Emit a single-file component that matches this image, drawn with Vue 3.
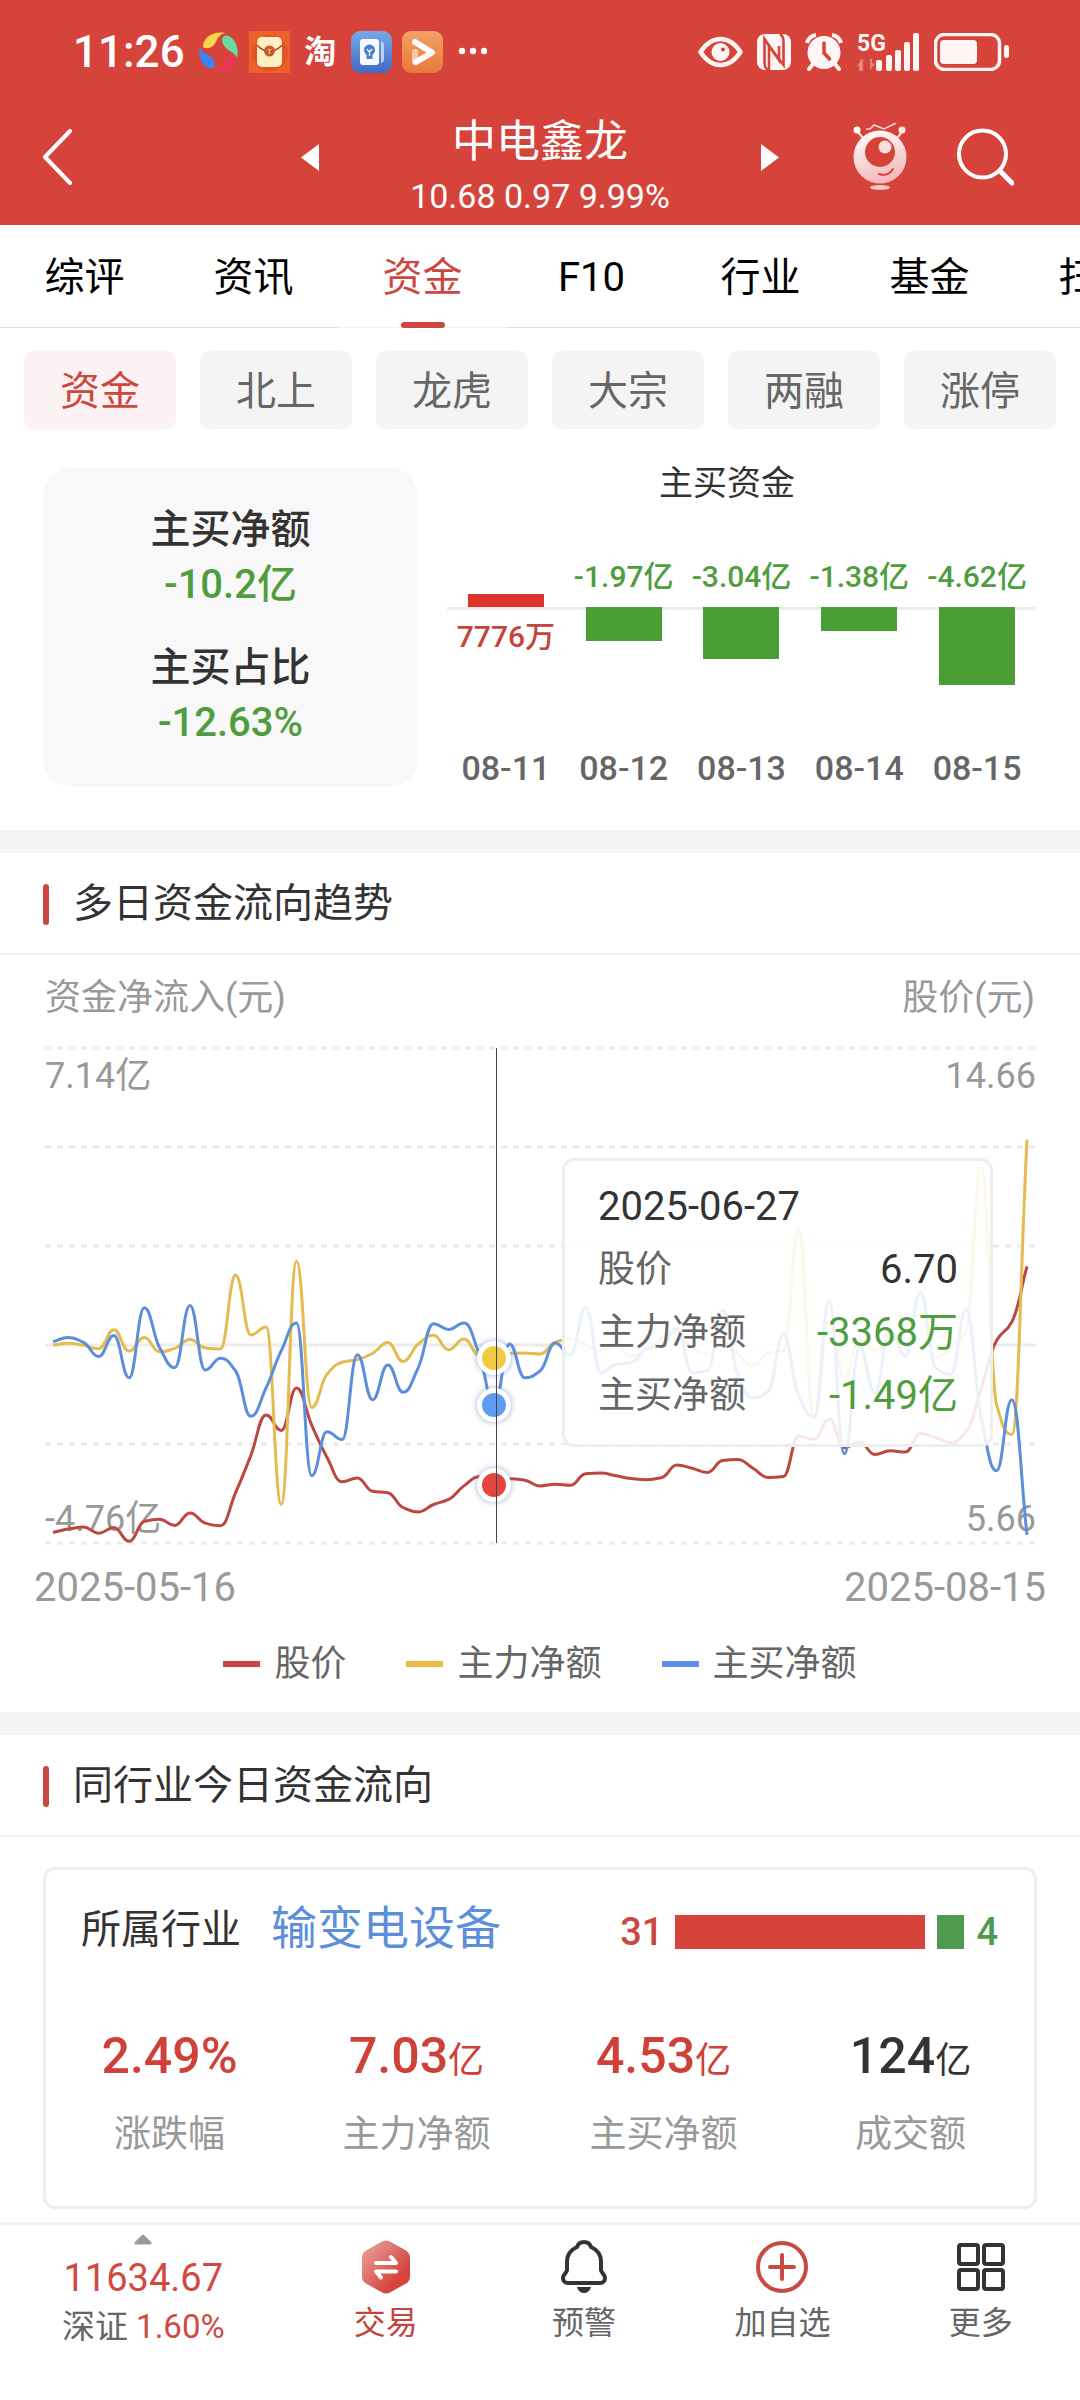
<template>
  <div class="page">
    <header class="header">
      <div class="status">
        <span class="time">11:26</span>
        <div class="apps">
          <svg width="40" height="42" viewBox="0 0 40 42">
            <path d="M4 15C5 6 14 0 26 2c-8 2-8 9-12 13-4 3-10 3-10 0z" fill="#fad648" />
            <path d="M24 6c4-4 10 0 13 7 2 5 2 10 1 14-3-6-7-6-11-10-3-3-5-8-3-11z" fill="#68dba0" />
            <path d="M37 27c-3 10-12 15-23 14 8-2 9-8 12-12 4-4 9-5 11-2z" fill="#ea3557" />
            <path d="M1 16c2 6 6 6 11 10 4 3 5 8 3 10-4 3-9 0-12-5-3-5-3-11-2-15z" fill="#3d82f7" />
          </svg>
          <svg width="41" height="42" viewBox="0 0 41 42">
            <rect width="41" height="42" fill="#ec6029" />
            <circle cx="21" cy="22" r="18" fill="#e35424" />
            <rect x="8" y="6" width="25" height="30" rx="5" fill="#fff0c4" />
            <path d="M8 14c4 5 8 6 12 6s9-1 13-6" fill="none" stroke="#a84b24" stroke-width="1.5" />
            <circle cx="20.500" cy="20" r="5.500" fill="#c8592c" />
            <text x="20.500" y="23" font-size="8" text-anchor="middle" fill="#ffe3a0">T</text>
          </svg>
          <span class="tao">淘</span>
          <svg width="41" height="42" viewBox="0 0 41 42">
            <defs>
              <linearGradient id="blueApp" x2="0" y2="1">
                <stop stop-color="#78a9e8" />
                <stop offset="1" stop-color="#4269c4" />
              </linearGradient>
            </defs>
            <rect width="41" height="42" rx="9" fill="url(#blueApp)" />
            <path d="M30 10q3 1 3 4v14q0 3-3 4z" fill="#b9d0f3" />
            <rect x="9" y="8" width="19" height="26" rx="3" fill="#f6faff" />
            <circle cx="18.500" cy="19" r="5.500" fill="#4c7dd2" />
            <path d="M15.500 24h6v4h-6z" fill="#4c7dd2" />
            <path d="M16 18l2.500 3 2.500-3M18.500 21v4" fill="none" stroke="#fff" stroke-width="1.200" />
          </svg>
          <svg width="41" height="42" viewBox="0 0 41 42">
            <defs>
              <linearGradient id="playApp" x2="0" y2="1">
                <stop stop-color="#f3a266" />
                <stop offset="1" stop-color="#e8793a" />
              </linearGradient>
            </defs>
            <rect width="41" height="42" rx="9" fill="url(#playApp)" />
            <path d="M13 21v10" stroke="#f7c9a6" stroke-width="6" stroke-linecap="round" />
            <path d="M13 11l17 10.500L14 31" fill="none" stroke="#fff" stroke-width="6" stroke-linecap="round" stroke-linejoin="round" />
          </svg>
          <svg width="40" height="42" viewBox="0 0 40 42" fill="#fff">
            <circle cx="9" cy="20" r="3.200" />
            <circle cx="20" cy="20" r="3.200" />
            <circle cx="31" cy="20" r="3.200" />
          </svg>
        </div>
        <div class="signals">
          <svg width="45" height="32" viewBox="0 0 45 32">
            <path d="M2.500 16Q11 3 22.500 3T42.500 16Q34 29 22.500 29T2.500 16z" fill="none" stroke="#fff5f5" stroke-width="4.500" stroke-linejoin="round" />
            <circle cx="22.500" cy="16" r="9" fill="#fff5f5" />
            <circle cx="25" cy="13.500" r="2" fill="#d5433b" />
          </svg>
          <svg width="34" height="36" viewBox="0 0 34 36">
            <rect width="34" height="36" rx="8" fill="#fff5f5" />
            <path d="M11 36Q7.500 34 7.500 29V5L22 26V12" fill="none" stroke="#d5433b" stroke-width="2.600" />
            <path d="M23 0Q26.500 2 26.500 7V31L12 12V36" fill="none" stroke="#d5433b" stroke-width="2.600" />
          </svg>
          <svg width="38" height="38" viewBox="0 0 38 38">
            <path d="M2 10q2-7 9-8M36 10q-2-7-9-8" fill="none" stroke="#fff5f5" stroke-width="4" />
            <path d="M8 31l-4 5M30 31l4 5" stroke="#fff5f5" stroke-width="4" stroke-linecap="round" />
            <circle cx="19" cy="19.500" r="16.500" fill="#fff5f5" />
            <path d="M19 10v10l5.500 6" fill="none" stroke="#d5433b" stroke-width="3.500" stroke-linecap="round" />
          </svg>
          <svg class="signal" width="63" height="38" viewBox="0 0 63 38" fill="#fff5f5">
            <text x="0" y="18" font-size="23" font-weight="700">5G</text>
            <path d="M0 33l5-7v12h-3v-5zM18 31l-5 6V26h2v4z" opacity=".35" />
            <path d="M5 26v12" stroke="#fff5f5" stroke-width="3" opacity=".2" />
            <rect x="19" y="27" width="6" height="11" rx="2" />
            <rect x="29" y="22" width="6" height="16" rx="2" />
            <rect x="38" y="17" width="6" height="21" rx="2" />
            <rect x="47" y="9" width="6" height="29" rx="2" />
            <rect x="56" y="0" width="6" height="38" rx="2" />
          </svg>
          <svg width="75" height="38" viewBox="0 0 75 38">
            <rect x="1.500" y="1.500" width="64" height="35" rx="9" fill="none" stroke="#fff5f5" stroke-width="3.500" />
            <rect x="6" y="7" width="37" height="24" rx="4" fill="#fff5f5" />
            <rect x="70" y="12" width="5" height="13" rx="2.500" fill="#fff5f5" />
          </svg>
        </div>
      </div>

      <div class="nav">
        <div class="nav-side">
          <button type="button" class="icon-btn" aria-label="返回">
            <svg width="30" height="56" viewBox="0 0 30 56">
              <path d="M27 2L2 28l25 26" fill="none" stroke="#fff" stroke-width="4" stroke-linecap="round" stroke-linejoin="round" />
            </svg>
          </button>
        </div>
        <div class="nav-center">
          <button type="button" class="icon-btn" aria-label="上一只">
            <svg width="18" height="27" viewBox="0 0 18 27"><path d="M18 0v27L0 13.500z" fill="#fff" /></svg>
          </button>
          <div class="stock">
            <h1>中电鑫龙</h1>
            <p>10.68 0.97 9.99%</p>
          </div>
          <button type="button" class="icon-btn" aria-label="下一只">
            <svg width="18" height="27" viewBox="0 0 18 27"><path d="M0 0v27l18-13.500z" fill="#fff" /></svg>
          </button>
        </div>
        <div class="nav-side right">
          <button type="button" class="icon-btn" aria-label="助手">
            <svg width="54" height="68" viewBox="0 0 54 68">
              <defs>
                <linearGradient id="robot" x2=".3" y2="1">
                  <stop stop-color="#fff" />
                  <stop offset="1" stop-color="#f4bcbc" />
                </linearGradient>
              </defs>
              <path d="M4 8l7 8M50 8l-7 8" stroke="#fbe5e5" stroke-width="2" />
              <circle cx="4" cy="7" r="3.500" fill="#fff" />
              <circle cx="49" cy="7" r="3.500" fill="#fbe5e5" />
              <path d="M13 6h4l4-4 10 4L43 0" fill="none" stroke="#fbdcdc" stroke-width="1.500" />
              <circle cx="27" cy="34" r="26.500" fill="url(#robot)" />
              <circle cx="27" cy="29" r="15" fill="#d5433b" />
              <circle cx="32" cy="24" r="6.500" fill="#fbdede" />
              <path d="M26 51q9 3 14-5" fill="none" stroke="#d5433b" stroke-width="2" stroke-linecap="round" />
              <ellipse cx="27" cy="64.500" rx="10" ry="2.500" fill="#f6c4c4" />
            </svg>
          </button>
          <button type="button" class="icon-btn" aria-label="搜索">
            <svg width="57" height="58" viewBox="0 0 57 58">
              <circle cx="25.500" cy="26" r="23.500" fill="none" stroke="#fff" stroke-width="4" />
              <path d="M43 43l12 12" stroke="#fff" stroke-width="5" stroke-linecap="round" />
            </svg>
          </button>
        </div>
      </div>
    </header>

    <nav class="tabs">
      <a v-for="tab in tabs" :key="tab" href="#" :class="{ active: tab === '资金' }" @click.prevent>{{ tab }}</a>
    </nav>

    <div class="pills">
      <button
        v-for="pill in pills"
        :key="pill"
        type="button"
        :class="{ active: pill === activePill }"
        @click="activePill = pill"
      >
        {{ pill }}
      </button>
    </div>

    <section class="overview">
      <div class="summary">
        <div>
          <h3>主买净额</h3>
          <p>-10.2亿</p>
        </div>
        <div>
          <h3>主买占比</h3>
          <p>-12.63%</p>
        </div>
      </div>
      <div class="bar-chart">
        <h3>主买资金</h3>
        <div class="bars">
          <div v-for="bar in bars" :key="bar.date" class="bar-col" :class="bar.up ? 'up' : 'down'">
            <div class="upper">
              <div v-if="bar.up" class="bar" :style="{ height: bar.size + 'px' }"></div>
              <span v-else>{{ bar.label }}</span>
            </div>
            <div class="lower">
              <span v-if="bar.up">{{ bar.label }}</span>
              <div v-else class="bar" :style="{ height: bar.size + 'px' }"></div>
            </div>
            <div class="date">{{ bar.date }}</div>
          </div>
        </div>
      </div>
    </section>

    <section class="block">
      <h2>多日资金流向趋势</h2>
      <div class="axis-names">
        <span>资金净流入(元)</span>
        <span>股价(元)</span>
      </div>
      <div class="plot">
        <div class="scale">
          <span>7.14亿</span>
          <span>14.66</span>
        </div>
        <div class="scale low">
          <span>-4.76亿</span>
          <span>5.66</span>
        </div>
        <svg class="lines" :viewBox="`0 0 ${W} ${H}`" preserveAspectRatio="none">
          <g stroke="#ececec" stroke-width="3">
            <line
              v-for="n in 6"
              :key="n"
              x1="0"
              :x2="W"
              :y1="(n - 1) * 99"
              :y2="(n - 1) * 99"
              :stroke-dasharray="n === 4 ? 'none' : '6 6'"
            />
          </g>
          <g fill="none" stroke-width="3" stroke-linejoin="round">
            <path :d="curve(price)" stroke="#bd4740" />
            <path :d="curve(mainForce)" stroke="#e5bb50" />
            <path :d="curve(activeBuy)" stroke="#5c8edc" />
          </g>
          <g v-for="dot in dots" :key="dot.color">
            <circle class="halo" cx="449" :cy="dot.y" r="17" fill="#fff" />
            <circle cx="449" :cy="dot.y" r="12" :fill="dot.color" />
          </g>
          <line x1="451.500" x2="451.500" y1="0" :y2="H" stroke="#444" />
        </svg>
        <div class="tooltip">
          <div>2025-06-27</div>
          <div><span>股价</span><b>6.70</b></div>
          <div><span>主力净额</span><b class="green">-3368万</b></div>
          <div><span>主买净额</span><b class="green">-1.49亿</b></div>
        </div>
      </div>
      <div class="range">
        <span>2025-05-16</span>
        <span>2025-08-15</span>
      </div>
      <ul class="legend">
        <li class="l-red">股价</li>
        <li class="l-yellow">主力净额</li>
        <li class="l-blue">主买净额</li>
      </ul>
    </section>

    <section class="block">
      <h2>同行业今日资金流向</h2>
      <div class="industry">
        <div class="industry-head">
          <span>所属行业</span>
          <a href="#" @click.prevent>输变电设备</a>
          <div class="ratio">
            <b class="red">31</b>
            <i class="rise"></i>
            <i class="fall"></i>
            <b class="leaf">4</b>
          </div>
        </div>
        <div class="stats">
          <div v-for="s in stats" :key="s.name">
            <p :class="s.tone">{{ s.value }}<small>{{ s.unit }}</small></p>
            <span>{{ s.name }}</span>
          </div>
        </div>
      </div>
    </section>

    <footer class="footer">
      <button type="button" class="index">
        <svg width="20" height="12" viewBox="0 0 20 12">
          <path d="M10 2l7 7H3z" fill="#999" stroke="#999" stroke-width="3" stroke-linejoin="round" />
        </svg>
        <strong>11634.67</strong>
        <span>深证 <em>1.60%</em></span>
      </button>
      <button type="button" class="trade">
        <svg width="48" height="54" viewBox="0 0 48 54">
          <defs>
            <linearGradient id="hex" x2="1" y2="1">
              <stop stop-color="#e9aaa6" />
              <stop offset=".75" stop-color="#d5433b" />
            </linearGradient>
          </defs>
          <path d="M20 1.500q4-2 8 0l16 9q4 2.500 4 7v19q0 4.500-4 7l-16 9q-4 2-8 0l-16-9q-4-2.500-4-7v-19q0-4.500 4-7z" fill="url(#hex)" />
          <path d="M14 23h20l-5-6M34 31.500H14l5 6" fill="none" stroke="#fff" stroke-width="4" stroke-linecap="round" stroke-linejoin="round" />
        </svg>
        交易
      </button>
      <button type="button">
        <svg width="46" height="54" viewBox="0 0 46 54">
          <path
            d="M23 2c-4 0-6 2-7 5C9 10 6 16 6 22v8c0 3-4 4-4 8 0 3 2 5 5 5h32c3 0 5-2 5-5 0-4-4-5-4-8v-8c0-6-3-12-10-15-1-3-3-5-7-5z"
            fill="none" stroke="#333" stroke-width="4" stroke-linejoin="round"
          />
          <path d="M16 47h14q-2 6-7 6t-7-6z" fill="#333" />
        </svg>
        预警
      </button>
      <button type="button">
        <svg width="54" height="54" viewBox="0 0 54 54" fill="none" stroke="#c94a43" stroke-width="4">
          <circle cx="27" cy="27" r="24" />
          <path d="M27 15v24M15 27h24" stroke-linecap="round" />
        </svg>
        加自选
      </button>
      <button type="button">
        <svg width="48" height="54" viewBox="0 0 48 54" fill="none" stroke="#333" stroke-width="4">
          <rect x="2" y="5" width="19" height="19" rx="2" />
          <rect x="27" y="5" width="19" height="19" rx="2" />
          <rect x="2" y="30" width="19" height="19" rx="2" />
          <rect x="27" y="30" width="19" height="19" rx="2" />
        </svg>
        更多
      </button>
    </footer>
  </div>
</template>

<script setup>
import { ref } from 'vue'

const tabs = ['综评', '资讯', '资金', 'F10', '行业', '基金', '扫雷']
const pills = ['资金', '北上', '龙虎', '大宗', '两融', '涨停']
const activePill = ref('资金')

const bars = [
  { date: '08-11', label: '7776万', up: true, size: 13 },
  { date: '08-12', label: '-1.97亿', up: false, size: 34 },
  { date: '08-13', label: '-3.04亿', up: false, size: 52 },
  { date: '08-14', label: '-1.38亿', up: false, size: 24 },
  { date: '08-15', label: '-4.62亿', up: false, size: 78 }
]

const stats = [
  { name: '涨跌幅', value: '2.49%', unit: '', tone: 'red' },
  { name: '主力净额', value: '7.03', unit: '亿', tone: 'red' },
  { name: '主买净额', value: '4.53', unit: '亿', tone: 'red' },
  { name: '成交额', value: '124', unit: '亿', tone: '' }
]

const W = 991
const H = 495
// one level per trading day, 54 is the top of the axis and 1519 the bottom
const TOP = 54
const BOTTOM = 1519

const price = [
  1488, 1478, 1472, 1490, 1473, 1514, 1455, 1449, 1467, 1430, 1460, 1468, 1370, 1260, 1140, 1186,
  1060, 1170, 1265, 1338, 1327, 1366, 1370, 1414, 1427, 1405, 1390, 1350, 1323, 1346, 1329, 1333,
  1350, 1345, 1348, 1314, 1312, 1320, 1328, 1332, 1325, 1288, 1298, 1310, 1275, 1272, 1298, 1325,
  1322, 1202, 1212, 1152, 1237, 1220, 1257, 1246, 1250, 1195, 1207, 1222, 1190, 1060, 920, 865, 700
]
const mainForce = [
  933, 928, 934, 944, 888, 951, 911, 953, 943, 917, 942, 945, 726, 903, 880, 1405,
  685, 1118, 1020, 984, 976, 958, 926, 982, 930, 904, 947, 915, 965, 970, 958, 957,
  960, 925, 915, 932, 950, 935, 965, 945, 915, 890, 945, 960, 925, 960, 995, 958,
  950, 594, 1150, 860, 1030, 915, 948, 925, 880, 843, 970, 940, 890, 408, 1110, 1198, 325
]
const activeBuy = [
  923, 911, 925, 967, 905, 1030, 823, 940, 1000, 816, 1007, 972, 1010, 1144, 1060, 950,
  868, 1320, 1190, 1213, 962, 1095, 992, 1073, 1000, 870, 887, 868, 960, 1111, 930, 1030,
  1010, 927, 963, 822, 1015, 990, 985, 945, 935, 885, 1015, 1010, 828, 1020, 1090, 1070,
  900, 1085, 1145, 803, 1255, 940, 1075, 890, 965, 778, 1000, 1020, 828, 1150, 1305, 1095, 1495
]

const dots = [
  { color: '#efcb45', y: 310 },
  { color: '#5f9bf2', y: 357 },
  { color: '#e2463f', y: 437 }
]

// length of the curve handles, as a share of the distance between two days
const SMOOTH = 0.45

// monotone cubic curve, flat at every peak and valley
function curve(levels) {
  const step = 974 / (levels.length - 1)
  const ys = levels.map(v => ((v - TOP) / (BOTTOM - TOP)) * H)
  const slopes = ys.map((y, i) => {
    if (i === 0) return ys[1] - y
    if (i === ys.length - 1) return y - ys[i - 1]
    const a = y - ys[i - 1]
    const b = ys[i + 1] - y
    return a * b <= 0 ? 0 : (2 * a * b) / (a + b)
  })
  let d = `M8 ${ys[0].toFixed(1)}`
  for (let i = 1; i < ys.length; i++) {
    const x0 = 8 + step * (i - 1)
    const x1 = 8 + step * i
    d += `C${(x0 + step * SMOOTH).toFixed(1)} ${(ys[i - 1] + slopes[i - 1] * SMOOTH).toFixed(1)}`
    d += ` ${(x1 - step * SMOOTH).toFixed(1)} ${(ys[i] - slopes[i] * SMOOTH).toFixed(1)}`
    d += ` ${x1.toFixed(1)} ${ys[i].toFixed(1)}`
  }
  return d
}
</script>

<style>
body {
  background: #fff;
}
</style>

<style scoped>
.page {
  display: flex;
  flex-direction: column;
  min-height: 100vh;
  overflow-x: hidden;
  background: #fff;
  color: #333;
  font-family: Roboto, 'Noto Sans CJK SC', sans-serif;
}

h1, h2, h3, p, ul {
  margin: 0;
  padding: 0;
  font-weight: 400;
}

svg {
  display: block;
  flex-shrink: 0;
}

button {
  border: none;
  padding: 0;
  background: none;
  font-family: inherit;
  color: inherit;
  cursor: pointer;
}

a {
  color: inherit;
  text-decoration: none;
}

/* header */
.header {
  background: #d5433b;
  color: #fff;
}

.status {
  display: flex;
  align-items: center;
  height: 103px;
  padding: 0 71px 0 73px;
}

.time {
  font-size: 44px;
  font-weight: 500;
}

.apps {
  display: flex;
  align-items: center;
  gap: 10px;
  margin-left: 14px;
}

.tao {
  width: 41px;
  font-size: 32px;
  font-weight: 700;
  line-height: 42px;
  text-align: center;
}

.signals {
  display: flex;
  align-items: center;
  gap: 14px;
  margin-left: auto;
}

.signal {
  overflow: visible;
}

.nav {
  display: grid;
  grid-template-columns: 1fr 478px 1fr;
  align-items: center;
  height: 122px;
}

.nav-side {
  padding: 0 66px 0 43px;
}

.nav-center {
  display: flex;
  justify-content: space-between;
  align-items: center;
}

.stock {
  padding-top: 8px;
  text-align: center;
}

.stock h1 {
  font-size: 44px;
  line-height: 56px;
}

.stock p {
  font-size: 34px;
  line-height: 52px;
}

.icon-btn {
  padding-bottom: 14px;
}

.nav-side.right {
  display: flex;
  justify-content: flex-end;
  gap: 50px;
}

/* tabs */
.tabs {
  display: flex;
  overflow: hidden;
}

.tabs a {
  flex: 0 0 169px;
  padding-top: 4px;
  border-bottom: 1px solid #ddd;
  color: #000;
  font-size: 40px;
  line-height: 98px;
  text-align: center;
}

.tabs a.active {
  position: relative;
  border-color: #f2f2f2;
  color: #cc4740;
}

.tabs a.active::after {
  content: '';
  position: absolute;
  bottom: -1px;
  left: 50%;
  width: 44px;
  height: 6px;
  margin-left: -22px;
  border-radius: 3px;
  background: #cc4740;
}

.pills {
  display: flex;
  gap: 24px;
  padding: 23px 24px 39px;
}

.pills button {
  flex: 1;
  padding-top: 4px;
  border-radius: 10px;
  background: #f4f4f4;
  color: #666;
  font-size: 40px;
  line-height: 74px;
}

.pills button.active {
  background: #fdf2f3;
  color: #cc4740;
}

/* overview */
.overview {
  display: flex;
  gap: 29px;
  padding: 0 44px 43px 43px;
}

.summary {
  display: flex;
  flex: 375;
  flex-direction: column;
  gap: 28px;
  padding: 34px 0 37px;
  border-radius: 28px;
  background: #f8f8f8;
  text-align: center;
}

.summary h3,
.summary p {
  font-size: 40px;
  font-weight: 500;
  line-height: 55px;
}

.summary p {
  color: #4f9d3e;
}

.bar-chart {
  flex: 589;
}

.bar-chart h3 {
  padding-right: 29px;
  font-size: 34px;
  line-height: 30px;
  text-align: center;
}

.bars {
  display: flex;
  font-size: 30px;
  font-weight: 500;
  line-height: 30px;
  white-space: nowrap;
}

.bar-col {
  display: flex;
  flex: 1;
  flex-direction: column;
  min-width: 0;
}

.upper,
.lower {
  display: flex;
  flex-direction: column;
  align-items: center;
}

.upper {
  justify-content: flex-end;
  height: 109px;
}

.lower {
  height: 146px;
  background: linear-gradient(#ececec, #ececec) top / 100% 3px no-repeat;
}

.down .upper {
  padding-bottom: 15px;
  box-sizing: border-box;
  color: #4f9d3e;
}

.up .lower {
  padding-top: 15px;
  box-sizing: border-box;
  color: #c4453d;
}

.bar {
  width: 76px;
  background: #4b9e33;
}

.up .bar {
  background: #dc342a;
}

.date {
  color: #666;
  font-size: 34px;
  font-weight: 500;
  text-align: center;
}

/* blocks */
.block {
  border-top: 23px solid #f4f4f4;
}

.block h2 {
  display: flex;
  align-items: center;
  gap: 24px;
  padding: 2px 0 0 43px;
  border-bottom: 2px solid #f0f0f0;
  font-size: 40px;
  line-height: 98px;
}

.block h2::before {
  content: '';
  width: 6px;
  height: 41px;
  border-radius: 3px;
  background: #cc4740;
}

.axis-names {
  display: flex;
  justify-content: space-between;
  padding: 17px 45px 24px;
  color: #999;
  font-size: 36px;
  line-height: 52px;
}

.plot {
  position: relative;
  display: flex;
  flex-direction: column;
  justify-content: space-between;
  height: 495px;
  margin: 0 44px 0 45px;
}

.scale {
  display: flex;
  justify-content: space-between;
  color: #999;
  font-size: 36px;
  line-height: 56px;
}

.scale.low {
  line-height: 48px;
}

.lines {
  position: absolute;
  top: 0;
  left: 0;
  width: 100%;
  height: 100%;
  overflow: visible;
}

.halo {
  filter: drop-shadow(0 0 3px rgba(90, 120, 180, 0.6));
}

.tooltip {
  position: absolute;
  top: 110px;
  right: 43px;
  box-sizing: border-box;
  width: 431px;
  padding: 14px 32px 17px 33px;
  border: 3px solid #eee;
  border-radius: 12px;
  background: rgba(255, 255, 255, 0.88);
  font-size: 40px;
  line-height: 63px;
}

.tooltip div {
  display: flex;
  justify-content: space-between;
}

.tooltip span {
  color: #666;
  font-size: 37px;
}

.tooltip b {
  font-weight: 400;
}

.tooltip .green {
  color: #4f9d3e;
}

.range {
  display: flex;
  justify-content: space-between;
  padding: 19px 34px 25px;
  color: #999;
  font-size: 40px;
  line-height: 52px;
}

.legend {
  display: flex;
  justify-content: center;
  gap: 60px;
  padding-bottom: 23px;
  list-style: none;
}

.legend li {
  display: flex;
  align-items: center;
  gap: 14px;
  color: #666;
  font-size: 36px;
  line-height: 50px;
}

.legend li::before {
  content: '';
  width: 37px;
  height: 6px;
  background: #cc463e;
}

.legend .l-yellow::before {
  background: #ebbb45;
}

.legend .l-blue::before {
  background: #5c8eea;
}

/* industry */
.industry {
  margin: 30px 43px 13px;
  padding: 25px 0 44px;
  border: 3px solid #eee;
  border-radius: 12px;
}

.industry-head {
  display: flex;
  align-items: center;
  padding: 0 36px 0 35px;
  font-size: 40px;
  line-height: 66px;
}

.industry-head a {
  margin-left: 30px;
  padding-bottom: 4px;
  color: #5c8edc;
  font-size: 46px;
}

.ratio {
  display: flex;
  align-items: center;
  gap: 12px;
  margin-left: auto;
  padding-top: 4px;
  color: #cc4740;
}

.ratio b {
  font-size: 38px;
  font-weight: 500;
}

.ratio .leaf {
  color: #4e9b50;
}

.ratio i {
  height: 34px;
}

.rise {
  width: 250px;
  background: #d5433b;
}

.fall {
  width: 27px;
  background: #4e9b50;
}

.stats {
  display: flex;
  padding-top: 58px;
  text-align: center;
}

.stats div {
  flex: 1;
}

.stats p {
  font-size: 50px;
  font-weight: 500;
  line-height: 66px;
}

.stats small {
  font-size: 36px;
  font-weight: 400;
}

.stats .red {
  color: #cf4038;
}

.stats span {
  display: block;
  padding-top: 14px;
  color: #999;
  font-size: 37px;
  line-height: 54px;
}

/* footer */
.footer {
  position: sticky;
  bottom: 0;
  display: flex;
  align-items: flex-start;
  flex: 1;
  border-top: 3px solid #f4f4f4;
  background: #fff;
  color: #666;
}

.footer button {
  display: flex;
  flex: 198;
  flex-direction: column;
  align-items: center;
  gap: 5px;
  padding-top: 15px;
  font-size: 32px;
  line-height: 48px;
}

.footer .index {
  flex: 286;
  gap: 8px;
  padding-top: 9px;
}

.index strong {
  color: #d04a42;
  font-size: 38px;
  font-weight: 400;
}

.index span {
  font-size: 33px;
  line-height: 34px;
}

.index em {
  color: #d04a42;
  font-style: normal;
}

.footer .trade {
  color: #c4453d;
}
</style>
